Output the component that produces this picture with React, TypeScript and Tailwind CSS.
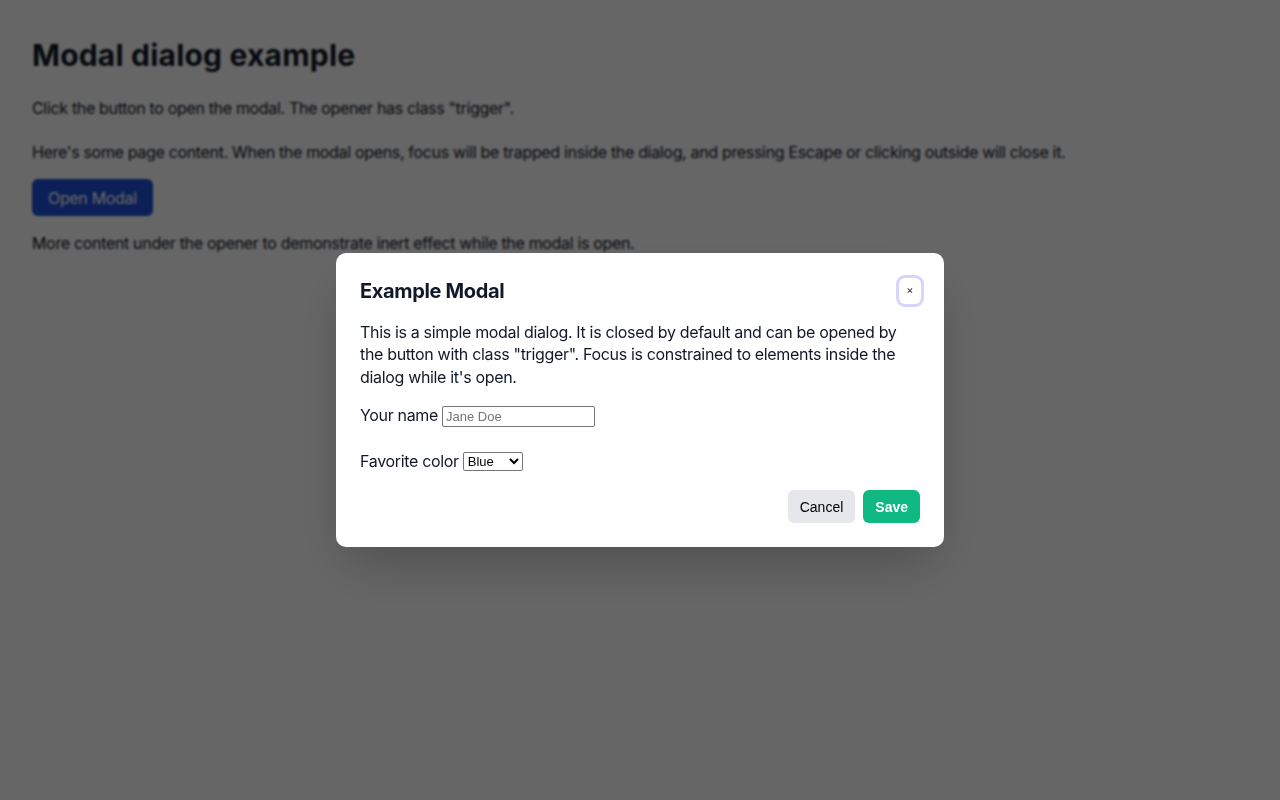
import React from "react";

export default function App() {
  return (
    <div
      className="relative min-h-[800px] bg-white text-[#111827]"
      style={{ fontFamily: "Inter, 'Noto Sans', sans-serif" }}
    >
      <div className="px-8 pt-[37px] tracking-[-0.33px]">
        <h1 className="text-3xl font-bold leading-9 tracking-[0.2px]">Modal dialog example</h1>
        <p className="mt-[23px] text-base leading-6">
          Click the button to open the modal. The opener has class "trigger".
        </p>
        <p className="mt-5 text-base leading-6">
          Here's some page content. When the modal opens, focus will be trapped inside the dialog, and pressing Escape or clicking outside will close it.
        </p>
        <button className="trigger mt-[15px] h-[37px] rounded-md bg-[#1e4fd9] px-4 text-base text-white">
          Open Modal
        </button>
        <p className="mt-[15px] text-base leading-6">
          More content under the opener to demonstrate inert effect while the modal is open.
        </p>
      </div>

      <div className="fixed inset-0 flex items-center justify-center bg-black/60 backdrop-blur-[1px]">
        <div className="w-[608px] rounded-[10px] bg-white p-6 shadow-2xl tracking-[-0.33px]">
          <div className="flex items-center justify-between">
            <h2 className="text-xl font-bold leading-7 tracking-[-0.35px] text-[#111827]">Example Modal</h2>
            <button className="mr-[-1px] flex h-[26px] w-[22px] items-center justify-center rounded-md bg-white text-[11px] leading-none tracking-normal text-[#333] ring-[3px] ring-[#d5d5fb]">
              ×
            </button>
          </div>
          <p className="mt-[16px] text-base leading-[22.5px]">
            This is a simple modal dialog. It is closed by default and can be opened by the button with class "trigger". Focus is constrained to elements inside the dialog while it's open.
          </p>
          <div className="mt-[16px] flex h-[22px] items-center text-base">
            <span>Your name</span>
            <input
              type="text"
              placeholder="Jane Doe"
              className="ml-1 mt-[3px] h-[21px] w-[153px] rounded-[2px] border border-[#767676] px-[3px] text-[13px] tracking-normal placeholder:text-[#757575]"
              style={{ fontFamily: "'Liberation Sans', Arial, sans-serif" }}
            />
          </div>
          <div className="mt-[24px] flex h-[22px] items-center text-base">
            <span>Favorite color</span>
            <select
              defaultValue="Blue"
              className="ml-1 mt-[1px] h-[19px] w-[60px] rounded-[2px] border border-[#767676] bg-white text-[13px] tracking-normal text-black"
              style={{ fontFamily: "'Liberation Sans', Arial, sans-serif" }}
            >
              <option>Red</option>
              <option>Green</option>
              <option>Blue</option>
            </select>
          </div>
          <div
            className="mt-[18px] flex justify-end gap-2 text-sm tracking-normal"
            style={{ fontFamily: "'Liberation Sans', Arial, sans-serif" }}
          >
            <button className="h-[33px] rounded-md bg-[#e5e7eb] px-3 text-black">Cancel</button>
            <button className="h-[33px] rounded-md bg-[#10b981] px-3 font-semibold text-white">Save</button>
          </div>
        </div>
      </div>
    </div>
  );
}
